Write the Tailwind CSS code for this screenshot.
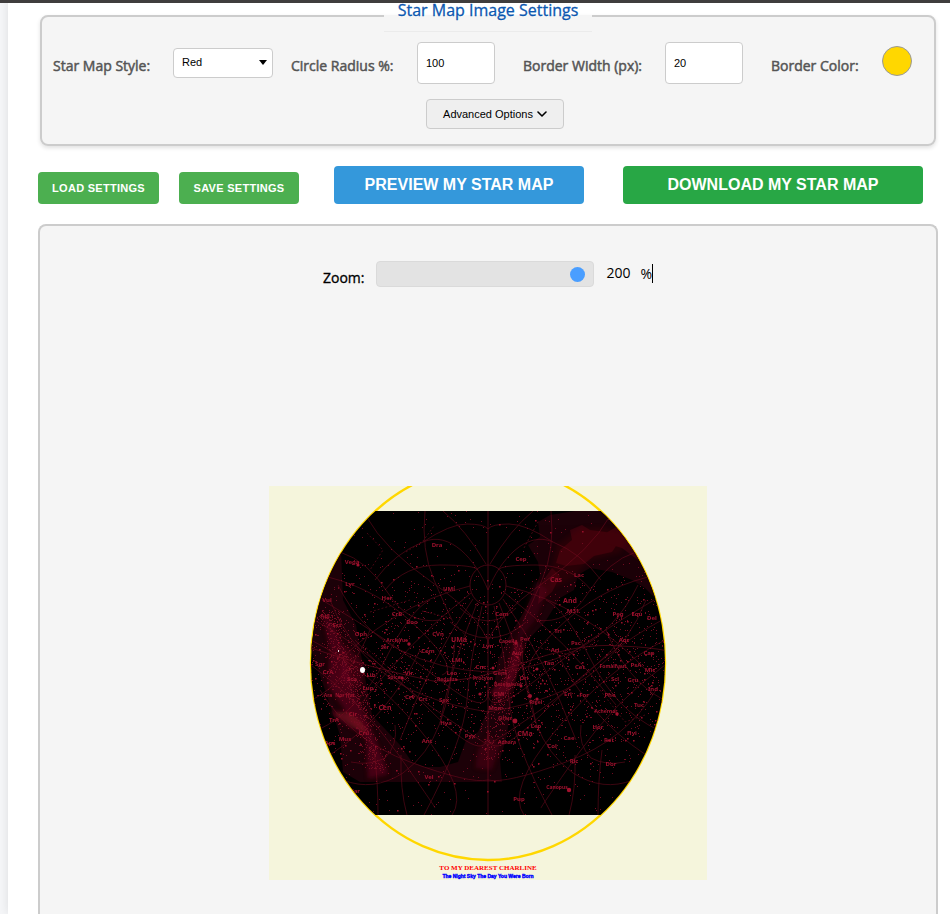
<!DOCTYPE html>
<html lang="en">
<head>
<meta charset="utf-8">
<meta name="viewport" content="width=device-width, initial-scale=1">
<title>Star Map Image Settings</title>
<script src="https://cdn.jsdelivr.net/npm/@tailwindcss/browser@4"></script>
</head>
<body class="bg-[#f5f6f8] font-['Open_Sans','Noto_Sans',sans-serif] text-black">
<div class="fixed inset-x-0 top-0 z-10 h-[3px] bg-[#3f3d3d]"></div>
<main class="ml-2 flex min-h-screen flex-col bg-white pr-3 pl-[30px] shadow-[0_0_10px_rgba(0,0,0,0.1)]">
  <fieldset class="mr-[2px] ml-[2px] min-w-0 rounded-lg border-2 border-[#ccc] bg-[#f5f5f5] pb-[15px] shadow-[0_2px_4px_rgba(0,0,0,0.12)]">
    <legend class="mx-auto h-8 border-b border-[#ebebeb] px-[14px] text-base leading-5 font-medium text-[#0b57b0] [-webkit-text-stroke:0.3px]">Star Map Image Settings</legend>
    <div class="flex items-center pt-[10px] pr-5 pl-[11px] text-sm font-normal whitespace-nowrap text-[#555]">
      <label for="style" class="w-[97px] pt-[6px] [-webkit-text-stroke:0.5px]">Star Map Style:</label>
      <div class="relative ml-[23px]">
        <select id="style" class="block h-[30px] w-[100px] appearance-none rounded border border-[#ccc] bg-white px-2 font-['Liberation_Sans',sans-serif] text-[11px] font-normal text-black"><option>Red</option><option>Blue</option></select>
        <svg class="pointer-events-none absolute top-3 right-[6px]" width="8" height="5" viewBox="0 0 8 5" aria-hidden="true"><path d="M0 0h8L4 5z"/></svg>
      </div>
      <label for="radius" class="ml-[18px] w-[103px] pt-[6px] [-webkit-text-stroke:0.5px]">Circle Radius %:</label>
      <input id="radius" type="text" value="100" class="ml-[23px] h-[42px] w-[78px] rounded border border-[#ccc] bg-white px-2 font-['Liberation_Sans',sans-serif] text-[11px] font-normal text-black">
      <label for="width" class="ml-7 w-[119px] pt-[6px] [-webkit-text-stroke:0.5px]">Border Width (px):</label>
      <input id="width" type="text" value="20" class="ml-[23px] h-[42px] w-[78px] rounded border border-[#ccc] bg-white px-2 font-['Liberation_Sans',sans-serif] text-[11px] font-normal text-black">
      <label for="color" class="ml-7 w-[88px] pt-[6px] [-webkit-text-stroke:0.5px]">Border Color:</label>
      <button id="color" type="button" aria-label="Border color" class="mb-1 ml-[23px] size-[30px] shrink-0 rounded-full border border-[#999] bg-[#ffd700]"></button>
    </div>
    <div class="mt-[15px] flex justify-center pl-[14px]">
      <button type="button" class="flex h-[30px] w-[138px] items-center justify-center gap-1 rounded border border-[#ccc] bg-[#efefef] font-['Liberation_Sans',sans-serif] text-[11px] whitespace-nowrap">Advanced Options
        <svg width="10" height="7" viewBox="0 0 10 7" fill="none" stroke="#000" stroke-width="1.6" stroke-linecap="round" stroke-linejoin="round" aria-hidden="true"><path d="M1 1l4 4 4-4"/></svg>
      </button>
    </div>
  </fieldset>

  <div class="mt-5 flex items-end pr-[15px] font-['Liberation_Sans',sans-serif] font-bold whitespace-nowrap text-white">
    <button type="button" class="h-8 w-[121px] rounded bg-[#4caf50] text-[11px] tracking-wide">LOAD SETTINGS</button>
    <button type="button" class="ml-5 h-8 w-[120px] rounded bg-[#4caf50] text-[11px] tracking-wide">SAVE SETTINGS</button>
    <button type="button" class="ml-[35px] h-[38px] w-[250px] rounded bg-[#3498db] text-base">PREVIEW MY STAR MAP</button>
    <button type="button" class="ml-auto h-[38px] w-[300px] rounded bg-[#28a745] text-base">DOWNLOAD MY STAR MAP</button>
  </div>

  <section class="mt-5 flex flex-1 flex-col items-center rounded-t-lg border-2 border-b-0 border-[#ccc] bg-[#f5f5f5] pt-[34px] pb-[34px]">
    <div class="flex items-center">
      <label for="zoom" class="pt-2 text-sm font-medium [-webkit-text-stroke:0.3px]">Zoom:</label>
      <input id="zoom" type="range" min="10" max="200" value="200" class="ml-3 h-[26px] w-[218px] appearance-none rounded border border-[#dadada] bg-[#e3e3e3] px-2 [&::-webkit-slider-thumb]:size-[15px] [&::-webkit-slider-thumb]:appearance-none [&::-webkit-slider-thumb]:rounded-full [&::-webkit-slider-thumb]:bg-[#4a9eff]">
      <span class="ml-3 pb-[2px] text-sm">200</span>
      <span class="mb-[2px] ml-[10px] border-r border-black text-sm leading-[19px]">%</span>
    </div>

    <svg id="map" class="mt-[198px] h-auto w-[438px] max-w-full" viewBox="269 486 438 394" role="img" aria-label="Star map preview">
      <defs>
        <clipPath id="disc"><ellipse cx="488" cy="663" rx="177" ry="197"/></clipPath>
        <clipPath id="sky"><rect x="300" y="511" width="376" height="304"/></clipPath>
        <filter id="soft"><feGaussianBlur stdDeviation="2"/></filter>
        <g id="half" fill="none">
          <path d="M366 516Q385 550 433 583T490 647"/>
          <path d="M425 511Q421 550 434 580T452 620"/>
          <path d="M375 580Q395 553 423 542C450 530 476 560 488 590"/>
          <path d="M423 542Q450 524 467 524T488 529"/>
          <path d="M443 511Q466 530 486 564"/>
          <path d="M340 552Q368 561 388 593T440 620"/>
          <path d="M385 590Q405 565 440 565T478 570"/>
          <path d="M328 577Q380 590 420 630T442 675"/>
          <path d="M471 593Q410 640 360 705M473 599Q430 660 400 740M477 603Q450 670 440 723M482 606Q470 660 467 700T424 815"/>
          <path d="M470 586Q390 605 325 675"/>
          <path d="M311 640Q370 670 420 730T452 815M314 620Q370 650 430 710T488 730M322 600Q390 640 440 680T488 690"/>
          <path d="M311 665Q360 700 398 754T435 808"/>
          <path d="M343 780Q373 792 403 773 428 755 440 723T455 640"/>
          <path d="M351 762Q370 766 385 758 398 745 395 725"/>
          <path d="M318 730Q360 710 385 660T430 600M330 755Q390 715 420 650M312 700Q350 680 370 630"/>
          <path d="M374 750Q378 780 378 815M401 755Q400 790 407 815"/>
          <path d="M330 600Q345 640 380 670T488 712M338 585Q360 630 400 650T488 672"/>
          <path d="M320 690Q350 740 410 762T488 780M355 640Q400 690 488 745"/>
          <path d="M460 608Q472 620 488 621M450 622Q468 638 488 638"/>
        </g>
      </defs>
      <rect x="269" y="486" width="438" height="394" fill="#f5f5dc"/>
      <ellipse cx="488" cy="663" rx="177" ry="197" fill="none" stroke="#ffd700" stroke-width="2.4"/>
      <g clip-path="url(#disc)"><g clip-path="url(#sky)">
        <rect x="300" y="511" width="376" height="304"/>
        <g fill="#1c0108">
          <path d="M341 550L343 600 356 625 362 660 372 715 400 745 412 762 425 767 440 767 458 762 466 740 478 732 492 700 498 660 507 640 525 610 532 596 540 575 538 562 528 545 540 537 538 522 550 515 575 511H605L668 560 663 606 645 588 632 580 612 572 590 568 578 575 574 590 560 598 545 622 528 640 518 670 510 710 507 735 500 760 502 782H360L343 772 340 735 325 690 308 640 322 580Z"/>
        </g>
        <g fill="#42040f" opacity=".7">
          <path d="M556 563L560 550 572 540 570 530 582 525 590 530 606 532 620 540 612 552 594 556 584 564 566 566Z"/>
          <path d="M618 526L626 536 640 548 638 560 622 548 608 544 604 534Z"/>
          <path d="M540 585L552 568 560 576 552 592 538 604Z"/>
        </g>
        <g filter="url(#soft)" fill="#8a0b24">
          <path opacity=".12" d="M552 568L557 545 580 528 605 527 630 535 620 553 590 560 570 580 550 590Z"/>
          <path opacity=".38" d="M322 612L334 625 345 650 352 685 365 715 380 750 388 774 368 779 366 740 348 715 328 685 330 650Z"/>
          <path opacity=".28" d="M345 645L365 665 360 690 340 680Z"/>
          <path opacity=".45" d="M515 640L523 645 518 670 510 690 500 700 488 692 505 680Z"/>
          <path opacity=".25" d="M489 735L500 745 492 770 475 768 478 750Z"/>
          <path opacity=".2" d="M535 580L548 590 535 620 515 645Z"/>
          <path opacity=".6" d="M330 712h18l14 10 6 12-16-6z"/>
        </g>
        <g stroke="#7b0c22" stroke-width=".8" opacity=".62"><use href="#half"/><use href="#half" transform="matrix(-1 0 0 1 976 0)"/></g>
        <g fill="none" stroke="#7b0c22" stroke-width=".8" opacity=".7">
          <path d="M488 511V815"/><ellipse cx="488" cy="585" rx="18" ry="20"/>
          <path d="M311 648Q370 668 433 681 470 683 520 664 580 642 620 646 650 647 668 651"/>
          <path stroke-dasharray="2 2" d="M367 533L383 550 370 570M406 552L423 541 434 526M422 611L450 618 466 636M541 648L570 655 600 640M363 645L391 670 420 690M600 690L625 722 645 715M524 548L539 520M370 612L410 600"/>
        </g>
        <path id="dim" fill="#700b20" shape-rendering="crispEdges"/>
        <path id="bright" fill="#960f28"/>
        <g fill="#a0112d"><circle cx="358" cy="565" r="1.6"/><circle cx="409" cy="644" r="1.7"/><circle cx="402" cy="678" r="1.7"/><circle cx="515" cy="721" r="2.4"/><circle cx="569" cy="790" r="2.2"/><circle cx="617" cy="714" r="1.7"/><circle cx="516" cy="643" r="1.7"/><circle cx="530" cy="696" r="2"/><circle cx="537" cy="699" r="1.6"/><circle cx="480" cy="694" r="1.6"/><circle cx="493" cy="668" r="1.5"/><circle cx="521" cy="686" r="1.5"/><circle cx="537" cy="669" r="1.5"/></g>
        <g id="names" fill="#9c112d" font-family="'Noto Sans',sans-serif" font-size="6" font-weight="700" text-anchor="middle"></g>
        <ellipse cx="362.500" cy="670" rx="2.500" ry="3" fill="#fff"/>
        <rect x="338" y="650" width="1" height="2" fill="#ddd"/>
      </g></g>
      <text x="488" y="870" text-anchor="middle" font-family="'Liberation Serif',serif" font-size="7" font-weight="700" fill="#f00">TO MY DEAREST CHARLINE</text>
      <text x="488" y="878" text-anchor="middle" font-family="'Liberation Sans',sans-serif" font-size="5" font-weight="700" fill="#00f" stroke="#00f" stroke-width=".4">The Night Sky The Day You Were Born</text>
    </svg>
  </section>
</main>
<script>
// Constellation and star names: name, x, baseline y
const names = [
  ['Dra',437,547],['Vega',352,564],['Lyr',350,586],['UMi',449,591],['Her',387,600],['CrB',397,616],['Boo',412,624],['Aql',325,618],['Vul',327,602],
  ['Oph',361,636],['CVn',438,636],['UMa',459,642],['Arcturus',397,642],['Ser',385,649],['Com',428,653],['LMi',457,662],['Sgr',320,666],['Sct',337,627],
  ['Sco',352,681],['Lib',371,677],['Spica',394,679],['Vir',409,675],['Leo',452,675],['Regulus',447,681],['CrA',328,674],['Lup',368,690],['Cnc',481,669],
  ['Procyon',483,680],['Lyn',488,648],['Cen',385,710],['Crv',410,699],['Crt',423,701],['Sex',444,702],['Hya',446,725],['Ant',427,743],['Pyx',470,738],
  ['Vel',429,779],['Car',355,793],['Ara',328,697],['Nor Hat',345,697],['TrA',334,722],['Mus',345,741],['Cir',353,716],['Cru',364,735],['Aps',330,745],
  ['Cep',521,561],['Cas',556,582],['Lac',579,577],['And',570,603],['Cam',502,616],['Per',525,641],['Capella',508,643],['M31',573,613],['Tri',558,633],
  ['Psc',576,645],['Ari',555,652],['Tau',549,665],['Aur',517,655],['Gem',500,675],['Ori',524,680],['Cet',580,669],['Peg',618,616],['Equ',637,616],['Del',652,620],
  ['Aqr',624,642],['Cap',649,655],['Fomalhaut',613,668],['PsA',636,667],['Mic',650,672],['Scl',615,681],['Gru',633,682],['Ind',653,691],
  ['CMi',499,696],['Mon',495,710],['Sirius',505,720],['CMa',525,736],['Adhara',507,744],['Lep',536,728],['Col',552,748],['Cae',569,740],['Eri',568,696],
  ['For',584,697],['Phe',610,697],['Achernar',606,713],['Tuc',639,707],['Hor',598,729],['Ret',609,742],['Hyi',632,735],['Dor',611,766],['Pic',574,763],
  ['Canopus',557,789],['Pup',519,801],['Rigel',536,704],['Betelgeuse',508,686]
];
const small = new Set(['Arcturus','Ser','Spica','Regulus','Procyon','Capella','Fomalhaut','Sirius','Adhara','Achernar','Canopus','Rigel','Betelgeuse','Nor Hat','Ara']);
const large = new Set(['UMa','CMa','Cen','Cas','And']);
const NS = 'http://www.w3.org/2000/svg', group = document.getElementById('names');
for (const [name, x, y] of names) {
  const t = document.createElementNS(NS, 'text');
  t.setAttribute('x', x); t.setAttribute('y', y);
  if (small.has(name)) t.setAttribute('font-size', 5);
  if (large.has(name)) t.setAttribute('font-size', 7);
  t.textContent = name;
  group.append(t);
}
// Seeded field stars, denser through the middle band
let seed = 12345;
const rnd = () => (seed = (seed * 16807) % 2147483647) / 2147483647;
let dim = '', bright = '';
for (let i = 0; i < 2700; i++) {
  const x = Math.round(311 + rnd() * 354);
  const y = Math.round(i % 4 ? 668 + (rnd() + rnd() - 1) * 115 : 511 + rnd() * 304);
  if (rnd() < 0.07) bright += `M${x} ${y}h1.6v1.6h-1.6z`;
  else dim += `M${x} ${y}h1v1h-1z`;
}
// Milky Way star clouds
for (let i = 0; i < 800; i++) {
  const t = rnd(), left = rnd() < 0.65, s = rnd() + rnd() - 1;
  const x = Math.round((left ? 328 + t * 50 : 519 - t * 30) + s * 16);
  const y = Math.round(left ? 610 + t * 160 : 640 + t * 120);
  dim += `M${x} ${y}h1v1h-1z`;
}
document.getElementById('dim').setAttribute('d', dim);
document.getElementById('bright').setAttribute('d', bright);
</script>
</body>
</html>
